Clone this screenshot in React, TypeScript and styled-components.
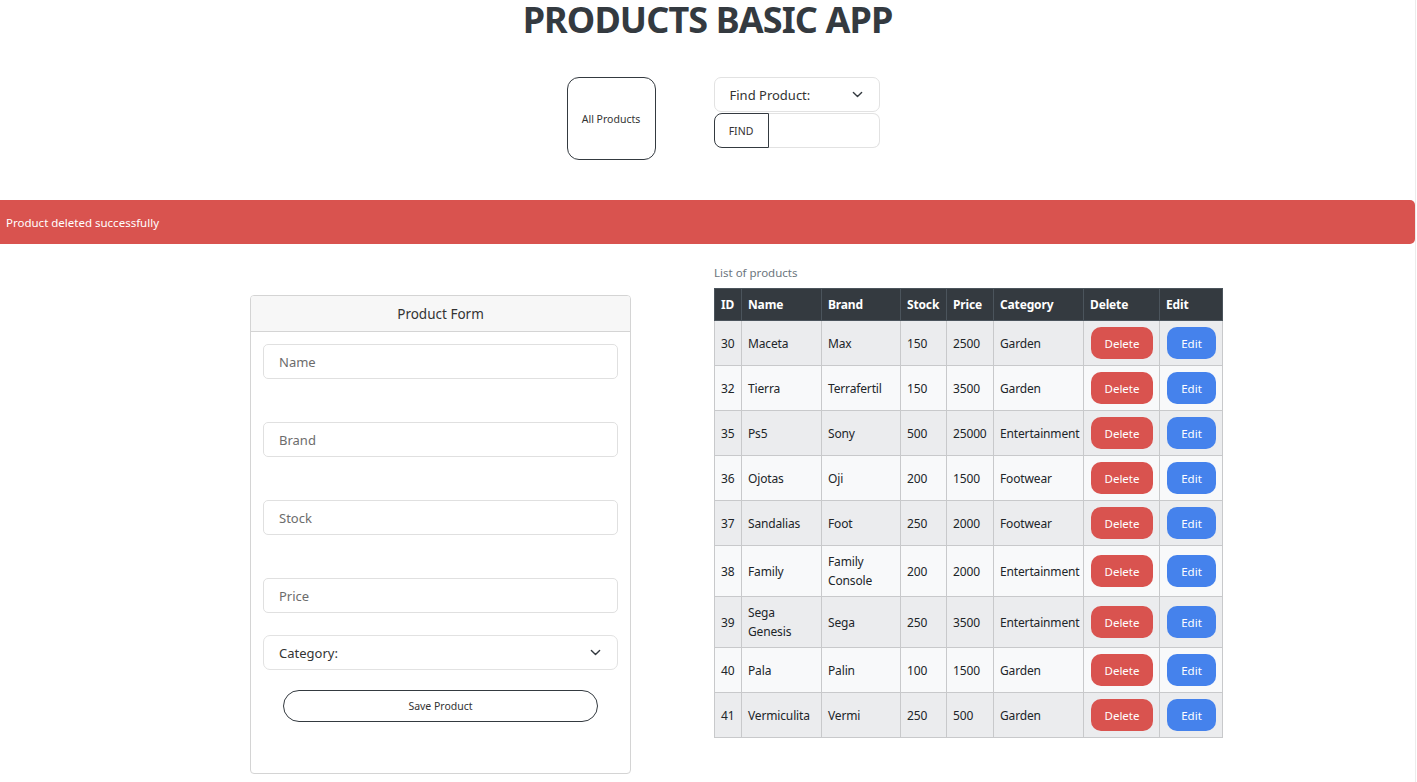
import styled, { createGlobalStyle } from 'styled-components'

const GlobalStyle = createGlobalStyle`
  body {
    margin: 0;
    font-family: 'Noto Sans', 'Open Sans', sans-serif;
    color: #212529;
    background: #fff;
    overflow: hidden;
  }
  * {
    box-sizing: border-box;
  }
`

const Page = styled.div`
  width: 1416px;
  min-height: 782px;
  border-right: 1px solid #ececec;
`

const Title = styled.h1`
  margin: 0;
  height: 38px;
  text-align: center;
  font-size: 36px;
  line-height: 40px;
  font-weight: 700;
  color: #343a40;
  letter-spacing: -0.9px;
`

const Controls = styled.div`
  display: flex;
  justify-content: center;
  align-items: flex-start;
  gap: 58px;
  margin-top: 39px;
  padding-left: 31px;
`

const OutlineButton = styled.button<{ $w: number; $h: number; $radius: string }>`
  width: ${(p) => p.$w}px;
  height: ${(p) => p.$h}px;
  border: 1px solid #343a40;
  border-radius: ${(p) => p.$radius};
  background: #fff;
  color: #333;
  font-family: inherit;
  font-size: 10.5px;
  padding: 0;
  cursor: pointer;
`

const FindColumn = styled.div`
  display: flex;
  flex-direction: column;
  width: 166px;
`

const SelectBox = styled.div`
  display: flex;
  align-items: center;
  justify-content: space-between;
  width: 100%;
  height: 35px;
  border: 1px solid #e2e2e2;
  border-radius: 7px;
  padding: 0 16px 0 15px;
  font-size: 13px;
  color: #333;
  background: #fff;
`

const InputGroup = styled.div`
  display: flex;
  height: 35px;
  margin-top: 1px;
`

const GroupInput = styled.div`
  flex: 1;
  border: 1px solid #e2e2e2;
  border-left: none;
  border-radius: 0 7px 7px 0;
`

const Alert = styled.div`
  margin-top: 40px;
  height: 44px;
  background: #d9534f;
  color: #fff;
  font-size: 11.5px;
  display: flex;
  align-items: center;
  padding-left: 6px;
  border-radius: 0 5px 5px 0;
`

const Main = styled.div`
  display: flex;
  align-items: flex-start;
  gap: 83px;
  padding: 22px 0 0 250px;
`

const Card = styled.div`
  width: 381px;
  height: 479px;
  margin-top: 29px;
  border: 1px solid #d4d4d4;
  border-radius: 4px;
  overflow: hidden;
`

const CardHeader = styled.div`
  height: 36px;
  background: #f7f7f7;
  border-bottom: 1px solid #d4d4d4;
  display: flex;
  align-items: center;
  justify-content: center;
  font-size: 13.5px;
  color: #333;
`

const CardBody = styled.div`
  display: flex;
  flex-direction: column;
  padding: 12px 12px 0;
`

const Field = styled.input<{ $gap: number }>`
  height: 35px;
  width: 100%;
  border: 1px solid #e0e0e0;
  border-radius: 5px;
  padding: 0 15px;
  font-family: inherit;
  font-size: 13px;
  margin-bottom: ${(p) => p.$gap}px;
  outline: none;

  &::placeholder {
    color: #6c6c6c;
  }
`

const SaveButton = styled(OutlineButton)`
  align-self: center;
  margin-top: 20px;
`

const ListSection = styled.div`
  width: 509px;
`

const Caption = styled.div`
  font-size: 11.5px;
  color: #6c757d;
  margin-bottom: 8px;
  line-height: 14px;
`

const Table = styled.table`
  width: 509px;
  border-collapse: collapse;
  table-layout: fixed;
  font-size: 12px;
  line-height: 19px;
  letter-spacing: -0.15px;
`

const Th = styled.th`
  background: #343a40;
  color: #fff;
  font-weight: 700;
  text-align: left;
  padding: 6px 6px;
  border: 1px solid #4b545c;
  white-space: nowrap;
`

const Row = styled.tr<{ $odd: boolean }>`
  background: ${(p) => (p.$odd ? '#ebecee' : '#f8f9fa')};
`

const Td = styled.td`
  padding: 6px 6px;
  border: 1px solid #c8c9cb;
  color: #212529;
  vertical-align: middle;
`

const ActionButton = styled.button<{ $color: string; $w: number }>`
  width: ${(p) => p.$w}px;
  height: 32px;
  border: none;
  border-radius: 10px;
  background: ${(p) => p.$color};
  color: #fff;
  font-family: inherit;
  font-size: 11.5px;
  padding: 0;
  display: block;
  margin-left: 1px;
  cursor: pointer;
`

const Chevron = () => (
  <svg width="11" height="11" viewBox="0 0 16 16" fill="none">
    <path d="M2 5l6 6 6-6" stroke="#343a40" strokeWidth="2" strokeLinecap="round" strokeLinejoin="round" />
  </svg>
)

const products = [
  { id: 30, name: 'Maceta', brand: 'Max', stock: 150, price: 2500, category: 'Garden' },
  { id: 32, name: 'Tierra', brand: 'Terrafertil', stock: 150, price: 3500, category: 'Garden' },
  { id: 35, name: 'Ps5', brand: 'Sony', stock: 500, price: 25000, category: 'Entertainment' },
  { id: 36, name: 'Ojotas', brand: 'Oji', stock: 200, price: 1500, category: 'Footwear' },
  { id: 37, name: 'Sandalias', brand: 'Foot', stock: 250, price: 2000, category: 'Footwear' },
  { id: 38, name: 'Family', brand: 'Family Console', stock: 200, price: 2000, category: 'Entertainment' },
  { id: 39, name: 'Sega Genesis', brand: 'Sega', stock: 250, price: 3500, category: 'Entertainment' },
  { id: 40, name: 'Pala', brand: 'Palin', stock: 100, price: 1500, category: 'Garden' },
  { id: 41, name: 'Vermiculita', brand: 'Vermi', stock: 250, price: 500, category: 'Garden' },
]

const colWidths = [27, 80, 79, 46, 47, 90, 76, 63]
const headers = ['ID', 'Name', 'Brand', 'Stock', 'Price', 'Category', 'Delete', 'Edit']

export default function App() {
  return (
    <Page>
      <GlobalStyle />
      <Title>PRODUCTS BASIC APP</Title>
      <Controls>
        <OutlineButton $w={89} $h={83} $radius="12px">
          All Products
        </OutlineButton>
        <FindColumn>
          <SelectBox>
            Find Product:
            <Chevron />
          </SelectBox>
          <InputGroup>
            <OutlineButton $w={55} $h={35} $radius="8px 0 0 8px">
              FIND
            </OutlineButton>
            <GroupInput />
          </InputGroup>
        </FindColumn>
      </Controls>
      <Alert>Product deleted successfully</Alert>
      <Main>
        <Card>
          <CardHeader>Product Form</CardHeader>
          <CardBody>
            <Field placeholder="Name" $gap={43} />
            <Field placeholder="Brand" $gap={43} />
            <Field placeholder="Stock" $gap={43} />
            <Field placeholder="Price" $gap={22} />
            <SelectBox>
              Category:
              <Chevron />
            </SelectBox>
            <SaveButton $w={315} $h={32} $radius="16px">
              Save Product
            </SaveButton>
          </CardBody>
        </Card>
        <ListSection>
          <Caption>List of products</Caption>
          <Table>
            <colgroup>
              {colWidths.map((w, i) => (
                <col key={i} style={{ width: w }} />
              ))}
            </colgroup>
            <thead>
              <tr>
                {headers.map((h) => (
                  <Th key={h}>{h}</Th>
                ))}
              </tr>
            </thead>
            <tbody>
              {products.map((p, i) => (
                <Row key={p.id} $odd={i % 2 === 0}>
                  <Td>{p.id}</Td>
                  <Td>{p.name}</Td>
                  <Td>{p.brand}</Td>
                  <Td>{p.stock}</Td>
                  <Td>{p.price}</Td>
                  <Td>{p.category}</Td>
                  <Td>
                    <ActionButton $color="#d9534f" $w={62}>
                      Delete
                    </ActionButton>
                  </Td>
                  <Td>
                    <ActionButton $color="#4582ec" $w={49}>
                      Edit
                    </ActionButton>
                  </Td>
                </Row>
              ))}
            </tbody>
          </Table>
        </ListSection>
      </Main>
    </Page>
  )
}
